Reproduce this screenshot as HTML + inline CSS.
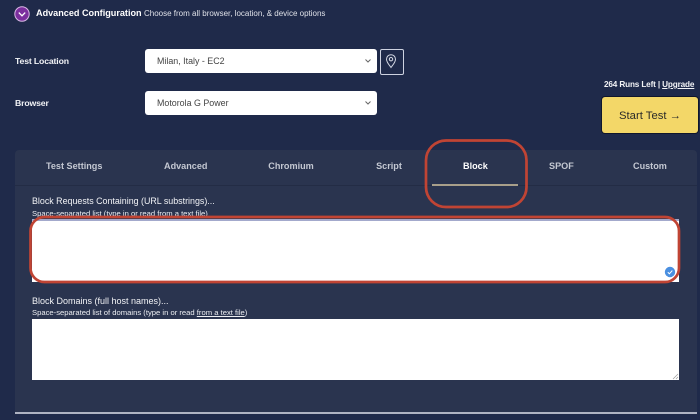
<!DOCTYPE html>
<html><head><meta charset="utf-8"><style>
html,body{margin:0;padding:0;background:#1f2a4a}
#r{position:relative;width:700px;height:420px;overflow:hidden;background:#1f2a4a;font-family:"Liberation Sans",sans-serif;color:#fff;filter:blur(.3px)}
#r div,#r svg{position:absolute}
.t{white-space:nowrap;line-height:12px}
.l{font-weight:700;font-size:8.700px;letter-spacing:-.15px;color:#f2f3f6}
.sel{background:#fff;border-radius:3px;left:145px;width:232px;height:24px;color:#444;font-size:8.900px;line-height:24px;text-indent:12px}
.tab{top:160px;font-weight:700;font-size:9.100px;color:#c4c8d2;text-align:center;line-height:12px;white-space:nowrap}
.ta{background:#fff;left:32px;width:647px}
</style></head><body><div id="r">
<svg style="left:14px;top:6px" width="16" height="16" viewBox="0 0 16 16"><circle cx="8" cy="8" r="7.200" fill="#7b2f9e" stroke="#d9b8e6" stroke-width="1"/><path d="M4.800 6.600 8 9.800l3.200-3.200" fill="none" stroke="#fff" stroke-width="1.300"/></svg>
<div class="t" style="left:36px;top:7px;font-weight:700;font-size:9.100px">Advanced Configuration</div>
<div class="t" style="left:144px;top:7.500px;font-size:8px;color:#dfe1e8">Choose from all browser, location, &amp; device options</div>
<div class="t l" style="left:15px;top:55px">Test Location</div>
<div class="sel" style="top:49px">Milan, Italy - EC2</div>
<svg style="left:364px;top:58px" width="8" height="6" viewBox="0 0 8 6"><path d="M1.500 1.500 4 4l2.500-2.500" fill="none" stroke="#666" stroke-width="1"/></svg>
<div style="left:380px;top:49px;width:22px;height:24px;border:1px solid #cdd2e0;border-radius:2px"></div>
<svg style="left:384px;top:53px" width="14" height="16" viewBox="0 0 14 16"><path d="M7 14.500C4.800 11.500 2.500 9 2.500 6.200a4.500 4.500 0 0 1 9 0C11.500 9 9.200 11.500 7 14.500Z" fill="none" stroke="#d5d9e4" stroke-width="1"/><circle cx="7" cy="6.200" r="1.700" fill="none" stroke="#d5d9e4" stroke-width="1"/></svg>
<div class="t l" style="left:15px;top:97px">Browser</div>
<div class="sel" style="top:91px">Motorola G Power</div>
<svg style="left:364px;top:100px" width="8" height="6" viewBox="0 0 8 6"><path d="M1.500 1.500 4 4l2.500-2.500" fill="none" stroke="#666" stroke-width="1"/></svg>
<div class="t" style="left:604px;top:79px;font-weight:700;font-size:8.200px;letter-spacing:-.15px;color:#f2f3f6">264 Runs Left | <span style="text-decoration:underline">Upgrade</span></div>
<div style="left:602px;top:97px;width:96px;height:36px;background:#f3d768;border-radius:3px;box-shadow:0 0 0 1px #10162c"></div>
<div class="t" style="left:619px;top:109.500px;font-size:11.300px;color:#2a2a2a">Start Test →</div>
<div style="left:15px;top:150px;width:682px;height:262px;background:#2a344f;border-radius:4px 4px 0 0"></div>
<div style="left:15px;top:185px;width:682px;height:1px;background:#232c45"></div>
<div style="left:15px;top:412px;width:682px;height:2px;background:#aeb3c2"></div>
<div class="tab" style="left:46px;width:56px">Test Settings</div>
<div class="tab" style="left:164px;width:42px">Advanced</div>
<div class="tab" style="left:268px;width:46px">Chromium</div>
<div class="tab" style="left:376px;width:26px">Script</div>
<div class="tab" style="left:463px;width:24px;color:#fff">Block</div>
<div class="tab" style="left:549px;width:22px">SPOF</div>
<div class="tab" style="left:633px;width:33px">Custom</div>
<div style="left:432px;top:184px;width:86px;height:2px;background:#a89f8a"></div>
<div class="t" style="left:32px;top:195px;font-size:8.900px;color:#f2f3f6">Block Requests Containing (URL substrings)...</div>
<div class="t" style="left:32px;top:208px;font-size:7.650px;color:#eceef2">Space-separated list (type in or read from a text file)</div>
<div class="ta" style="top:219px;height:63px;box-shadow:inset 0 2px 0 #a3a9cc"></div>
<div class="t" style="left:32px;top:295px;font-size:9px;color:#f2f3f6">Block Domains (full host names)...</div>
<div class="t" style="left:32px;top:307px;font-size:7.650px;color:#eceef2">Space-separated list of domains (type in or read <span style="text-decoration:underline">from a text file</span>)</div>
<div class="ta" style="top:319px;height:61px"></div>
<svg style="left:672px;top:373px" width="7" height="7" viewBox="0 0 7 7"><path d="M1 6 6 1M4 6 6 4" stroke="#999" stroke-width=".7"/></svg>
<svg style="left:0;top:0" width="700" height="420" viewBox="0 0 700 420">
<rect x="426" y="140.500" width="100.500" height="66.500" rx="20" fill="none" stroke="#c04434" stroke-width="2.700"/>
<rect x="30.500" y="217" width="648.500" height="65" rx="14" fill="none" stroke="#c04434" stroke-width="2.700"/>
<circle cx="670" cy="272" r="5.200" fill="#4a8fe0"/>
<path d="M667.800 272.300 669.400 273.800 672.300 270.600" fill="none" stroke="#fff" stroke-width="1"/>
</svg>
</div></body></html>
